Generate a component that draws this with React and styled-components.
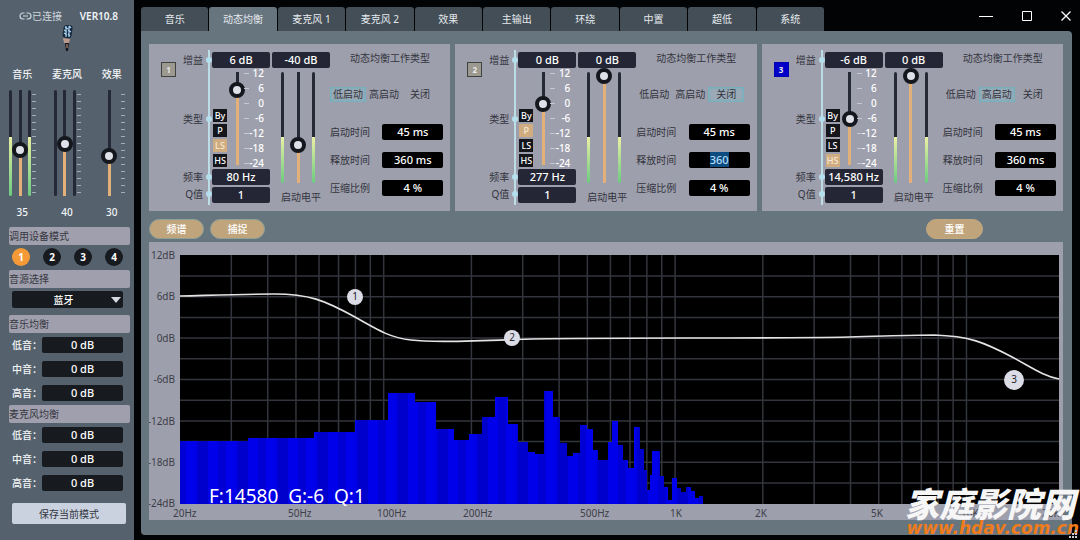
import React, { useState } from "react";
import styled, { createGlobalStyle } from "styled-components";

const GlobalStyle = createGlobalStyle`
    *, *::before, *::after {
        box-sizing: border-box;
    }
    body {
        margin: 0;
        background: #000;
    }
    body, button, input, select {
        font-family: "Noto Sans", "Noto Sans CJK SC", sans-serif;
        font-size: 10px;
        line-height: 14px;
    }
    button {
        padding: 0;
        border: 0;
        cursor: pointer;
    }
`

const Window = styled.div`
    position: relative;
    display: flex;
    gap: 7px;
    min-height: 100vh;
    background: #020304;
`

/* ---------- sidebar ---------- */

const Sidebar = styled.aside`
    display: flex;
    flex-direction: column;
    flex: none;
    width: 134px;
    padding-top: 8px;
    background: #55626d;
    color: #f3f5f8;
`

const Status = styled.div`
    display: flex;
    align-items: center;
    justify-content: space-between;
    height: 16px;
    padding: 0 16px 0 19px;
`

const Connection = styled.span`
    display: flex;
    align-items: center;
    color: #cfd5dc;
`

const Version = styled.span`
    font-weight: 600;
`

const MicLogo = styled.svg`
    display: block;
    width: 14px;
    height: 30px;
    margin: 0 auto;
`

const Mixer = styled.div`
    display: flex;
    margin-top: 13px;
`

const Channel = styled.div`
    display: flex;
    flex-direction: column;
    width: 45px;
    padding-bottom: 8px;
`

const ChannelName = styled.label`
    text-align: center;
    font-weight: 500;
`

const ChannelBody = styled.div`
    display: flex;
    align-items: center;
    height: 114px;
    margin: 5px 0 5px 9px;
`

const ChannelValue = styled.output`
    text-align: center;
    font-weight: 500;
`

const Bar = styled.div`
    flex: none;
    width: 3px;
    height: ${props => props.$height}px;
    visibility: ${props => props.$hidden ? "hidden" : "visible"};
    border-radius: 2px;
    background: linear-gradient(
        to top,
        #6ccb80 0,
        #e9f0a4 ${props => props.$level}%,
        #252837 ${props => props.$level}%
    );
`

const Slider = styled.input`
    ${props => {
        const fill = `calc(4px + (100% - 8px) * ${props.$ratio})`;
        return `
            appearance: none;
            flex: none;
            writing-mode: vertical-lr;
            direction: rtl;
            width: 16px;
            height: ${props.$height}px;
            margin: 0;
            background: transparent;
            cursor: pointer;
            &::-webkit-slider-runnable-track {
                width: 16px;
                height: 100%;
                background: linear-gradient(to top, #e2b078 ${fill}, #252837 ${fill}) center / 3px calc(100% - 8px) no-repeat;
            }
            &::-webkit-slider-thumb {
                appearance: none;
                width: 16px;
                height: 16px;
                border: 4px solid #14171d;
                border-radius: 50%;
                background: #dfe0ea;
            }
        `
    }}
`

const Ticks = styled.div`
    flex: none;
    width: 4px;
    height: 99px;
    margin-left: 1px;
    background: repeating-linear-gradient(#a4adb6 0 1px, transparent 1px 7px);
`

const Section = styled.section`
    display: flex;
    flex-direction: column;
    margin: 0 4px 0 9px;
`

const SectionTitle = styled.h2`
    height: 18px;
    margin: 0;
    border-radius: 2px;
    background: #a09fad;
    color: #35373f;
    font-size: 10px;
    font-weight: 400;
    line-height: 19px;
`

const SectionBody = styled.div`
    display: flex;
    flex-direction: column;
    gap: 8px;
    padding: 4px 7px 4px 3px;
`

const ModeRow = styled.div`
    display: flex;
    justify-content: space-between;
    padding: 3px 7px 4px 3px;
`

const ModeButton = styled.button`
    width: 18px;
    height: 18px;
    border-radius: 50%;
    background: ${props => props.$active ? "#f59a36" : "#171b20"};
    color: #fff;
    font-weight: 700;
`

const SelectWrapper = styled.div`
    display: flex;
    align-items: center;
    height: 17px;
    margin: 3px 7px 7px 3px;
    padding-right: 2px;
    border-radius: 2px;
    background: #171b20;
    select {
        appearance: none;
        flex: 1;
        min-width: 0;
        padding: 0 0 0 4px;
        border: 0;
        background: transparent;
        color: #fff;
        font-weight: 500;
        text-align-last: center;
    }
`

const ToneRow = styled.div`
    display: flex;
    align-items: center;
    justify-content: space-between;
    height: 16px;
    font-weight: 500;
`

const SaveButton = styled.button`
    height: 21px;
    margin: 8px 8px 0 12px;
    border-radius: 2px;
    background: #cbd2df;
    color: #33363f;
`

const Field = styled.input`
    display: block;
    flex: none;
    width: ${props => props.$width}px;
    height: 16px;
    padding: 0 0 2px;
    border: 0;
    border-radius: 2px;
    outline: none;
    background: ${props => props.$tone};
    color: #fff;
    font-size: 11px;
    font-weight: 500;
    text-align: center;
    &::selection {
        background: #0d4c80;
        color: #b5dcf8;
    }
`

/* ---------- main area ---------- */

const Main = styled.main`
    display: flex;
    flex-direction: column;
    flex: 1;
    min-width: 0;
    padding: 7px 8px 5px 0;
`

const TopBar = styled.header`
    display: flex;
    justify-content: space-between;
    height: 24px;
`

const Tabs = styled.nav`
    display: flex;
    gap: 1px;
    width: 683px;
`

const Tab = styled.button`
    flex: 1;
    height: 24px;
    border-radius: 3px 3px 0 0;
    background: ${props => props.$active ? "#67757f" : "#434e57"};
    color: #e6eaee;
`

const WindowButtons = styled.div`
    display: flex;
    align-items: center;
    gap: 27px;
    height: 17px;
    button {
        display: flex;
        background: transparent;
    }
`

const Panel = styled.div`
    flex: 1;
    padding: 13px 9px 15px 8px;
    border-radius: 0 4px 4px 4px;
    background: #67757f;
`

const Bands = styled.div`
    display: grid;
    grid-template-columns: repeat(3, 1fr);
    gap: 5px;
`

const BandCard = styled.section`
    display: flex;
    height: 167px;
    padding: 6px 7px 0 12px;
    background: #9e9fac;
    color: #33353e;
`

const BandNumber = styled.span`
    flex: none;
    width: 15px;
    height: 15px;
    margin-top: 12px;
    border: 1px solid ${props => props.$active ? "#0000b4" : "#40423f"};
    background: ${props => props.$active ? "#0000c8" : "#9c9a90"};
    color: #e8e8e8;
    font-size: 8px;
    font-weight: 700;
    line-height: 13px;
    text-align: center;
`

const Rail = styled.div`
    display: grid;
    grid-template-rows: 16px 101px 16px 18px;
    align-items: center;
    flex: none;
    width: 34px;
    height: 155px;
    padding: 2px 0;
    border-right: 2px solid #bcdce6;
`

const RailLabel = styled.label`
    position: relative;
    padding-right: 5px;
    text-align: right;
    white-space: nowrap;
    &::after {
        content: "";
        position: absolute;
        top: 4px;
        right: -4px;
        width: 6px;
        height: 6px;
        border-radius: 50%;
        background: #b5dfec;
    }
`

const Column = styled.div`
    display: flex;
    flex-direction: column;
    align-items: center;
    flex: none;
    width: 58px;
    margin: 2px 0 0 2px;
`

const GainArea = styled.div`
    display: flex;
    align-items: center;
    width: 100%;
    height: 101px;
    padding-left: 1px;
`

const TypeList = styled.div`
    display: flex;
    flex-direction: column;
    align-self: flex-end;
    gap: 2px;
    margin: 0 2px 2px 0;
`

const TypeButton = styled.button`
    width: 14px;
    height: 13px;
    background: ${props => props.$active ? "#d0ad80" : "#14161c"};
    color: ${props => props.$active ? "#f6e8d4" : "#fff"};
    font-size: 9px;
    font-weight: 500;
    line-height: 13px;
`

const GainTicks = styled.div`
    width: 5px;
    height: 91px;
    margin-left: -1px;
    background: repeating-linear-gradient(#c6c7d0 0 1px, transparent 1px 15px);
`

const Scale = styled.ol`
    flex: 1;
    margin: 0;
    padding: 0 6px 0 0;
    list-style: none;
    color: #fff;
    font-weight: 500;
    line-height: 15px;
    text-align: right;
    white-space: nowrap;
`

const FieldStack = styled.div`
    display: flex;
    flex-direction: column;
    gap: 2px;
`

const Levels = styled.div`
    display: flex;
    align-items: center;
    gap: 6px;
    height: 119px;
    margin-bottom: 3px;
    padding-right: 6px;
`

const Dynamics = styled.div`
    display: flex;
    flex-direction: column;
    flex: 1;
    min-width: 0;
    padding-top: 1px;
`

const DynamicsTitle = styled.h3`
    margin: 0 0 22px;
    padding-left: 20px;
    font-size: 10px;
    font-weight: 400;
`

const StartOptions = styled.div`
    display: flex;
    margin-bottom: 22px;
`

const StartOption = styled.button`
    width: 36px;
    height: 15px;
    background: ${props => props.$active ? "#9ba9b6" : "transparent"};
    box-shadow: ${props => props.$active ? "inset 0 0 3px 1px #68b4c0" : "none"};
    color: #33353e;
    line-height: 15px;
`

const TimeRow = styled.div`
    display: flex;
    align-items: center;
    justify-content: space-between;
    height: 16px;
    margin-bottom: 12px;
`

const Toolbar = styled.div`
    display: flex;
    gap: 6px;
    padding: 8px 80px 3px 0;
`

const PillButton = styled.button`
    width: ${props => props.$right ? 57 : 55}px;
    height: 20px;
    margin-left: ${props => props.$right ? "auto" : "0"};
    border: 1px solid ${props => props.$right ? "#c2a880" : "#8fa096"};
    border-radius: 10px;
    background: #c0a47c;
    color: #fff;
    font-weight: 500;
`

const Chart = styled.svg`
    display: block;
    width: 100%;
    height: auto;
    background: #9e9fac;
    .axis {
        fill: #3c3e48;
        font-size: 10px;
    }
    .readout {
        fill: #fff;
        font-size: 19px;
        white-space: pre;
    }
    .node {
        fill: #22242c;
        font-size: 10px;
        text-anchor: middle;
    }
`

const SiteMark = styled.div`
    position: absolute;
    right: 1px;
    bottom: 4px;
    display: flex;
    flex-direction: column;
    align-items: flex-end;
    pointer-events: none;
`

const SiteName = styled.span`
    padding-right: 4px;
    color: #f6f6f6;
    font-family: "Noto Sans CJK SC", sans-serif;
    font-size: 34px;
    font-style: italic;
    font-weight: 900;
    line-height: 34px;
`

const SiteUrl = styled.span`
    color: #f07c1c;
    font-family: "DejaVu Sans", sans-serif;
    font-size: 17px;
    font-style: italic;
    font-weight: 700;
    line-height: 16px;
`

const Grip = styled.svg`
    position: absolute;
    right: 2px;
    bottom: 1px;
`

const CHANNELS = [
    { id: "music", name: "音乐", value: 35, meters: true, level: 56 },
    { id: "mic", name: "麦克风", value: 40, meters: true, level: 0 },
    { id: "fx", name: "效果", value: 30, meters: false, level: 0 },
];

const TONES = ["低音：", "中音：", "高音："];

const TABS = ["音乐", "动态均衡", "麦克风 1", "麦克风 2", "效果", "主输出", "环绕", "中置", "超低", "系统"];

const TYPES = ["By", "P", "LS", "HS"];

const STARTS = ["低启动", "高启动", "关闭"];

const BANDS = [
    { id: 1, gain: 6, threshold: -40, freq: "80 Hz", type: "LS", start: "低启动", release: "360 ms" },
    { id: 2, gain: 0, threshold: 0, freq: "277 Hz", type: "P", start: "关闭", release: "360", editing: true },
    { id: 3, gain: -6, threshold: 0, freq: "14,580 Hz", type: "HS", start: "高启动", release: "360 ms" },
];

// [left edge, top edge] of every spectrum bin, each one runs up to the next
const SPECTRUM = [
    [31, 199], [99, 196], [165, 190], [206, 178], [239, 151], [266, 160], [287, 187], [305, 198],
    [320, 192], [333, 175], [346, 155], [359, 182], [369, 200], [379, 210], [386, 212], [395, 149],
    [404, 175], [411, 201], [418, 214], [424, 211], [431, 183], [438, 187], [444, 208], [449, 218],
    [459, 200], [463, 179], [469, 203], [474, 218], [479, 226], [485, 185], [491, 207], [495, 228],
    [498, 248], [501, 233], [503, 209], [511, 234], [515, 245], [519, 258], [523, 236], [528, 246],
    [532, 250], [537, 245], [542, 249], [546, 256], [550, 254], [554, 262],
];

const FREQ_LABELS = [
    ["20Hz", 24], ["50Hz", 139], ["100Hz", 228], ["200Hz", 314], ["500Hz", 431],
    ["1K", 521], ["2K", 606], ["5K", 722], ["10K", 812], ["20K", 893],
];

const GAIN_LABELS = ["12dB", "6dB", "0dB", "-6dB", "-12dB", "-18dB", "-24dB"];

const NODES = [[1, 206, 55], [2, 363, 96], [3, 865, 138]];

const freqToX = (freq) => 31 + 291.4 * Math.log10(freq / 20);

const gridFreqs = [];
[10, 100, 1000, 10000].forEach(decade => {
    for(let i = 1; i < 10; i++) {
        const freq = decade * i;
        if(freq > 20 && freq < 20000)
            gridFreqs.push(freq);
    }
});

function Fader({ id, label, min, max, value, height, onChange }) {
    return (
        <Slider
            id={id}
            type="range"
            aria-label={label}
            min={min}
            max={max}
            value={value}
            onChange={(e) => onChange(Number(e.target.value))}
            $height={height}
            $ratio={(value - min) / (max - min)}
        />
    );
}

function MixerChannel({ channel }) {
    const [value, setValue] = useState(channel.value);

    return (
        <Channel>
            <ChannelName htmlFor={channel.id}>{channel.name}</ChannelName>
            <ChannelBody>
                <Bar $height={106} $level={channel.level} $hidden={!channel.meters}/>
                <Fader id={channel.id} min={0} max={82} value={value} height={114} onChange={setValue}/>
                <Bar $height={106} $level={channel.level} $hidden={!channel.meters}/>
                <Ticks/>
            </ChannelBody>
            <ChannelValue htmlFor={channel.id}>{value}</ChannelValue>
        </Channel>
    );
}

function ToneSection({ id, title }) {
    return (
        <Section>
            <SectionTitle>{title}</SectionTitle>
            <SectionBody>
                {TONES.map((tone, i) => (
                    <ToneRow key={tone}>
                        <label htmlFor={`${id}-${i}`}>{tone}</label>
                        <Field id={`${id}-${i}`} defaultValue="0 dB" $width={81} $tone="#171b20"/>
                    </ToneRow>
                ))}
            </SectionBody>
        </Section>
    );
}

function Band({ band }) {
    const [gain, setGain] = useState(band.gain);
    const [threshold, setThreshold] = useState(band.threshold);
    const [type, setType] = useState(band.type);
    const [start, setStart] = useState(band.start);
    const id = `band${band.id}`;

    return (
        <BandCard>
            <BandNumber $active={band.id === 3}>{band.id}</BandNumber>
            <Rail>
                <RailLabel htmlFor={`${id}-gain`}>增益</RailLabel>
                <RailLabel as="span">类型</RailLabel>
                <RailLabel htmlFor={`${id}-freq`}>频率</RailLabel>
                <RailLabel htmlFor={`${id}-q`}>Q值</RailLabel>
            </Rail>
            <Column>
                <Field id={`${id}-gain`} readOnly value={`${gain} dB`} $width={58} $tone="#242635"/>
                <GainArea>
                    <TypeList>
                        {TYPES.map(item => (
                            <TypeButton key={item} $active={item === type} onClick={() => setType(item)}>{item}</TypeButton>
                        ))}
                    </TypeList>
                    <Fader label="增益" min={-24} max={12} value={gain} height={101} onChange={setGain}/>
                    <GainTicks/>
                    <Scale>
                        {[12, 6, 0, -6, -12, -18, -24].map(mark => <li key={mark}>{mark}</li>)}
                    </Scale>
                </GainArea>
                <FieldStack>
                    <Field id={`${id}-freq`} defaultValue={band.freq} $width={58} $tone="#242635"/>
                    <Field id={`${id}-q`} defaultValue="1" $width={58} $tone="#242635"/>
                </FieldStack>
            </Column>
            <Column>
                <Field aria-label="启动电平" readOnly value={`${threshold} dB`} $width={58} $tone="#242635"/>
                <Levels>
                    <Bar $height={111} $level={41}/>
                    <Fader id={`${id}-level`} min={-60} max={0} value={threshold} height={119} onChange={setThreshold}/>
                    <Bar $height={111} $level={41}/>
                </Levels>
                <label htmlFor={`${id}-level`}>启动电平</label>
            </Column>
            <Dynamics>
                <DynamicsTitle>动态均衡工作类型</DynamicsTitle>
                <StartOptions>
                    {STARTS.map(item => (
                        <StartOption key={item} $active={item === start} onClick={() => setStart(item)}>{item}</StartOption>
                    ))}
                </StartOptions>
                <TimeRow>
                    <label htmlFor={`${id}-attack`}>启动时间</label>
                    <Field id={`${id}-attack`} defaultValue="45 ms" $width={61} $tone="#000"/>
                </TimeRow>
                <TimeRow>
                    <label htmlFor={`${id}-release`}>释放时间</label>
                    <Field
                        id={`${id}-release`}
                        defaultValue={band.release}
                        autoFocus={band.editing}
                        onFocus={(e) => e.target.select()}
                        $width={61}
                        $tone="#000"
                    />
                </TimeRow>
                <TimeRow>
                    <label htmlFor={`${id}-ratio`}>压缩比例</label>
                    <Field id={`${id}-ratio`} defaultValue="4 %" $width={61} $tone="#000"/>
                </TimeRow>
            </Dynamics>
        </BandCard>
    );
}

function ResponseChart() {
    return (
        <Chart viewBox="0 0 914 278" role="img" aria-label="频谱">
            <defs>
                <pattern id="bins" width="40" height="10" patternUnits="userSpaceOnUse">
                    <rect width="40" height="10" fill="#0000ea"/>
                    <rect x="8" width="11" height="10" fill="#0000cc"/>
                    <rect x="29" width="8" height="10" fill="#0000d4"/>
                </pattern>
            </defs>
            <rect x="31" y="13" width="879" height="249" fill="#000"/>
            <g stroke="#33353c" strokeWidth="1.5">
                {gridFreqs.map(freq => <line key={freq} x1={freqToX(freq)} x2={freqToX(freq)} y1="13" y2="262"/>)}
                {[...Array(11)].map((_, i) => <line key={i} x1="31" x2="910" y1={34 + i * 20.7} y2={34 + i * 20.7}/>)}
            </g>
            {SPECTRUM.slice(0, -1).map(([x, y], i) => (
                <rect key={x} x={x} y={y} width={SPECTRUM[i + 1][0] - x} height={262 - y} fill="url(#bins)"/>
            ))}
            <path
                d="M31 54 C70 53 100 52 125 52 C160 52 175 58 206 75 C232 90 243 96 262 98 C285 101 330 99 363 97.5 C450 95 600 97 700 95 C740 94 760 93 785 93 C820 94 835 100 865 116 C885 127 895 134 910 137"
                fill="none"
                stroke="#e4e4e4"
                strokeWidth="1.6"
            />
            {NODES.map(([n, x, y]) => (
                <g key={n}>
                    <circle cx={x} cy={y} r={n === 3 ? 10 : 8} fill="#dcdce6"/>
                    <text className="node" x={x} y={y + 3}>{n}</text>
                </g>
            ))}
            {GAIN_LABELS.map((label, i) => (
                <text key={label} className="axis" x="26" y={17 + i * 41.4} textAnchor="end">{label}</text>
            ))}
            {FREQ_LABELS.map(([label, x]) => (
                <text key={label} className="axis" x={x} y="275">{label}</text>
            ))}
            <text className="readout" x="60" y="261">{"F:14580  G:-6  Q:1"}</text>
        </Chart>
    );
}

function App() {
    const [mode, setMode] = useState(1);
    const [tab, setTab] = useState("动态均衡");

    return (
        <Window>
            <GlobalStyle/>
            <Sidebar>
                <Status>
                    <Connection>
                        <svg width="13" height="10" viewBox="0 0 13 10" fill="none" stroke="#cfd5dc" strokeWidth="1.2">
                            <path d="M5.5 2H4a3 3 0 0 0 0 6h1.5M7.5 2H9a3 3 0 0 1 0 6H7.5M4 5h5"/>
                        </svg>
                        已连接
                    </Connection>
                    <Version>VER10.8</Version>
                </Status>
                <MicLogo viewBox="0 0 14 30">
                    <rect x="3" y="1" width="9" height="13" rx="3" fill="#16283c" transform="rotate(8 7 8)"/>
                    <path d="M5 3l3 2M9 2l2 2M4 6l3 2M8 6l3 2M4 9l3 2M8 10l2 2M6 2v11M9 2v11" stroke="#a9d4f2" strokeWidth="1.2"/>
                    <path d="M3 14l7 1-1 4H4z" fill="#b79a8c"/>
                    <path d="M5 19h4l-1 8H6z" fill="#14171b"/>
                    <path d="M7 20v4" stroke="#d49a80"/>
                </MicLogo>
                <Mixer>
                    {CHANNELS.map(channel => <MixerChannel key={channel.id} channel={channel}/>)}
                </Mixer>
                <Section>
                    <SectionTitle>调用设备模式</SectionTitle>
                    <ModeRow>
                        {[1, 2, 3, 4].map(n => (
                            <ModeButton key={n} $active={n === mode} onClick={() => setMode(n)}>{n}</ModeButton>
                        ))}
                    </ModeRow>
                </Section>
                <Section>
                    <SectionTitle as="label" htmlFor="source">音源选择</SectionTitle>
                    <SelectWrapper>
                        <select id="source" defaultValue="蓝牙">
                            <option>蓝牙</option>
                        </select>
                        <svg width="10" height="6" viewBox="0 0 10 6">
                            <path d="M0 0h10L5 6z" fill="#d5d8de"/>
                        </svg>
                    </SelectWrapper>
                </Section>
                <ToneSection id="music-eq" title="音乐均衡"/>
                <ToneSection id="mic-eq" title="麦克风均衡"/>
                <SaveButton>保存当前模式</SaveButton>
            </Sidebar>
            <Main>
                <TopBar>
                    <Tabs>
                        {TABS.map(name => (
                            <Tab key={name} $active={name === tab} onClick={() => setTab(name)}>{name}</Tab>
                        ))}
                    </Tabs>
                    <WindowButtons>
                        <button aria-label="最小化">
                            <svg width="16" height="12" stroke="#fff"><path d="M1 6.5h14"/></svg>
                        </button>
                        <button aria-label="最大化">
                            <svg width="12" height="12" fill="none" stroke="#fff"><path d="M1.5 1.5h9v9h-9z"/></svg>
                        </button>
                        <button aria-label="关闭">
                            <svg width="12" height="12" stroke="#fff" strokeWidth="1.3"><path d="M1.5 1.5l9 9M10.5 1.5l-9 9"/></svg>
                        </button>
                    </WindowButtons>
                </TopBar>
                <Panel>
                    <Bands>
                        {BANDS.map(band => <Band key={band.id} band={band}/>)}
                    </Bands>
                    <Toolbar>
                        <PillButton>频谱</PillButton>
                        <PillButton>捕捉</PillButton>
                        <PillButton $right>重置</PillButton>
                    </Toolbar>
                    <ResponseChart/>
                </Panel>
            </Main>
            <SiteMark>
                <SiteName>家庭影院网</SiteName>
                <SiteUrl>www.hdav.com.cn</SiteUrl>
            </SiteMark>
            <Grip width="9" height="9" fill="#c9ccd2">
                <path d="M6 0h2v2H6zM3 3h2v2H3zM6 3h2v2H6zM0 6h2v2H0zM3 6h2v2H3zM6 6h2v2H6z"/>
            </Grip>
        </Window>
    );
}

export default App;
